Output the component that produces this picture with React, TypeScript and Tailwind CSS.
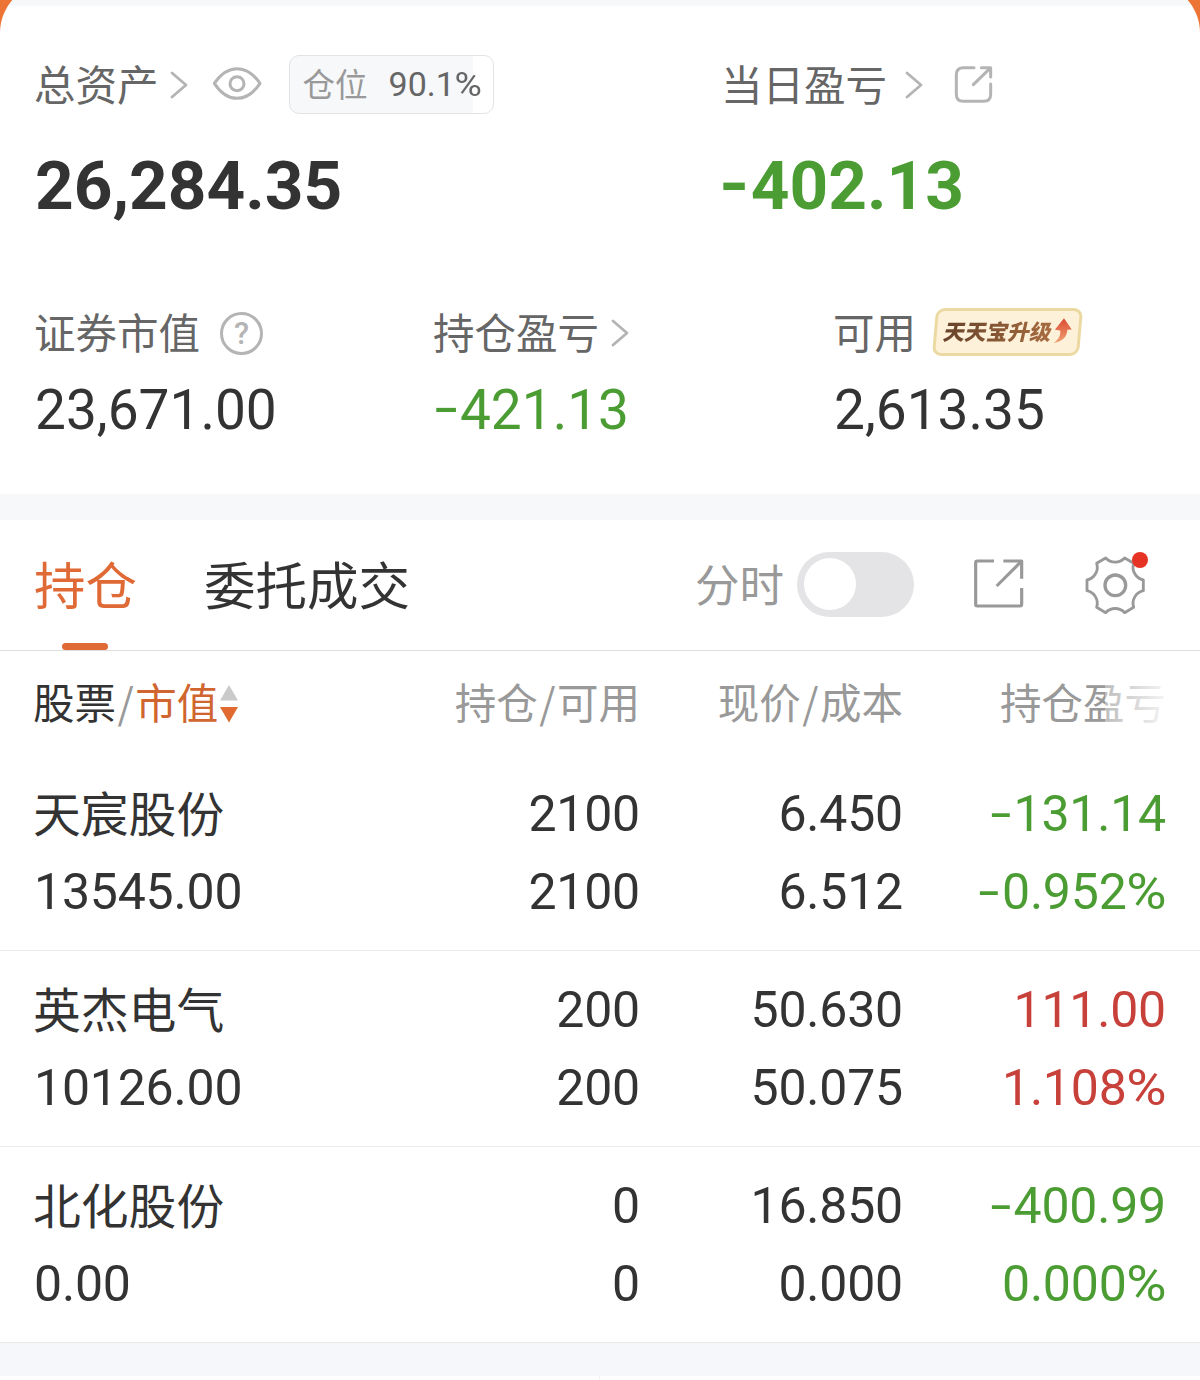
import type { ReactNode } from "react";
import { clsx } from "clsx";

type Tone = "plain" | "up" | "down";

interface Holding {
  name: string;
  marketValue: string;
  amount: string;
  available: string;
  price: string;
  cost: string;
  profit: string;
  profitRate: string;
  tone: Tone;
}

const holdings: Holding[] = [
  {
    name: "天宸股份",
    marketValue: "13545.00",
    amount: "2100",
    available: "2100",
    price: "6.450",
    cost: "6.512",
    profit: "-131.14",
    profitRate: "-0.952%",
    tone: "down",
  },
  {
    name: "英杰电气",
    marketValue: "10126.00",
    amount: "200",
    available: "200",
    price: "50.630",
    cost: "50.075",
    profit: "111.00",
    profitRate: "1.108%",
    tone: "up",
  },
  {
    name: "北化股份",
    marketValue: "0.00",
    amount: "0",
    available: "0",
    price: "16.850",
    cost: "0.000",
    profit: "-400.99",
    profitRate: "0.000%",
    tone: "down",
  },
];

const toneClass: Record<Tone, string> = {
  plain: "text-[#333]",
  up: "text-[#c8403a]",
  down: "text-[#4b9d33]",
};

// The minus and percent signs are wider than the font's own glyphs.
function Num({ value, bold, className }: { value: string; bold?: boolean; className?: string }) {
  const negative = value.startsWith("-");
  const percent = value.endsWith("%");
  const digits = value.replace(/[-%]/g, "");
  return (
    <span
      className={clsx(
        "font-[Roboto,sans-serif] whitespace-nowrap",
        bold && "font-bold",
        className,
      )}
    >
      {negative && (
        <span
          className={clsx(
            "inline-block origin-left -translate-y-[0.03em]",
            bold ? "-ml-[0.03em] w-[0.47em] scale-x-115" : "w-[0.49em] scale-x-150 pl-[0.02em]",
          )}
        >
          -
        </span>
      )}
      {digits}
      {percent && <span className="ml-[0.06em] inline-block origin-right scale-x-110">%</span>}
    </span>
  );
}

function Chevron({ className }: { className?: string }) {
  return (
    <svg
      viewBox="0 0 18 28"
      className={clsx("h-7 w-[18px] shrink-0", className)}
      fill="none"
      stroke="#b4b4b4"
      strokeWidth="2.8"
      strokeLinecap="round"
      strokeLinejoin="round"
    >
      <path d="M2 2l14 12L2 26" />
    </svg>
  );
}

function EyeIcon() {
  return (
    <svg
      viewBox="636 196 150 105"
      className="mb-1 ml-[24px] h-[35px] w-[50px] shrink-0"
      fill="none"
      stroke="#b4b4b4"
      strokeWidth="9"
      strokeLinejoin="round"
    >
      <path d="M643 248C662 220 684 204 711 204S761 220 780 248C761 277 738 293 711 293S662 277 643 248Z" />
      <circle cx="711" cy="249" r="21" />
    </svg>
  );
}

function ShareIcon() {
  return (
    <svg
      viewBox="762 195 117 117"
      className="mb-[2px] ml-[31px] size-[39px] shrink-0"
      fill="none"
      stroke="#b4b4b4"
      strokeWidth="9"
      strokeLinecap="round"
      strokeLinejoin="round"
    >
      <path d="M822 203H790Q769 203 769 224V283Q769 304 790 304H851Q872 304 872 283V252" />
      <path d="M844 203H872V231M870 205L820 254" />
    </svg>
  );
}

function ShareSquareIcon() {
  return (
    <svg
      viewBox="878 87 156 156"
      className="mb-[2px] ml-[59px] size-[52px] shrink-0"
      fill="none"
      stroke="#999"
      strokeWidth="9.5"
      strokeLinejoin="round"
    >
      <path d="M941 96H891Q886 96 886 101V226Q886 231 891 231H1019Q1024 231 1024 226V177" />
      <path d="M969 96H1024V149" />
      <path d="M1022 98L949 171" />
    </svg>
  );
}

function GearIcon() {
  return (
    <svg
      viewBox="1213 71 186 186"
      className="size-[62px]"
      fill="none"
      stroke="#999"
      strokeLinejoin="round"
    >
      <path
        strokeWidth="8.5"
        d="M1278 83L1251 99A39 39 0 0 1 1222 149V181A39 39 0 0 1 1251 231L1278 247A39 39 0 0 1 1335 247L1362 231A39 39 0 0 1 1391 181V149A39 39 0 0 1 1362 99L1335 83A39 39 0 0 1 1278 83Z"
      />
      <circle cx="1307" cy="165" r="31" strokeWidth="10" />
    </svg>
  );
}

function HelpIcon() {
  return (
    <span className="ml-[20px] flex size-[43px] shrink-0 items-center justify-center rounded-full border-[3px] border-[#b4b4b4] font-[Roboto,sans-serif] text-[31px] leading-none font-medium text-[#b4b4b4]">
      ?
    </span>
  );
}

function UpgradeTag() {
  return (
    <span className="mb-[2px] ml-[18px] flex h-12 w-[147px] shrink-0 -skew-x-5 items-center rounded-[9px] border-[3px] border-[#ecd9a2] bg-[#fdf1da] pl-[7px]">
      <span className="-skew-x-8 bg-linear-to-r from-[#67432a] to-[#a86c40] bg-clip-text pb-[2px] text-[21.6px] leading-[36px] font-black whitespace-nowrap text-transparent">
        天天宝升级
      </span>
      <svg viewBox="764 82 62 80" className="mb-1 h-[27px] w-[21px] shrink-0 skew-x-5">
        <defs>
          <linearGradient id="tagArrow" x1="0" y1="0" x2="0" y2="1">
            <stop offset="0" stopColor="#dc4a32" />
            <stop offset="1" stopColor="#f0a273" />
          </linearGradient>
        </defs>
        <path
          fill="url(#tagArrow)"
          d="M799 86L822 119L809 120C808 141 795 155 768 159C783 149 789 138 788 122L772 120Z"
        />
      </svg>
    </span>
  );
}

function PositionBadge() {
  return (
    <span className="mb-[2px] ml-[27px] flex h-[59px] w-[205px] shrink-0 items-center rounded-[10px] border border-[#e3e3e5] bg-linear-to-r from-[#f7f8fa] from-90% to-white to-90% pl-[13px]">
      <span className="pb-[2px] text-[32.5px] leading-[54px] text-[#999]">仓位</span>
      <Num value="90.1%" className="ml-[21px] text-[34px] leading-[56px] text-[#666]" />
    </span>
  );
}

function Label({ text, children }: { text: string; children?: ReactNode }) {
  return (
    <div className="flex h-[60px] items-center">
      <span className="pb-1 text-[41.5px] leading-[56px] whitespace-nowrap text-[#666]">{text}</span>
      {children}
    </div>
  );
}

function Summary() {
  return (
    <section className="h-[494px] overflow-hidden bg-[#ec7535]">
      <div className="-mt-[17px] h-[511px] overflow-hidden rounded-t-[50px] bg-white">
        <div className="h-[23px] bg-[#f7f8fa]" />
        <div className="flex pt-[49px] pl-[34px]">
          <div className="w-[687px]">
            <Label text="总资产">
              <Chevron className="ml-[11px]" />
              <EyeIcon />
              <PositionBadge />
            </Label>
            <Num
              bold
              value="26,284.35"
              className="mt-[31px] ml-px block text-[67.5px] leading-[80px] text-[#333]"
            />
          </div>
          <div>
            <Label text="当日盈亏">
              <Chevron className="ml-[18px]" />
              <ShareIcon />
            </Label>
            <Num
              bold
              value="-402.13"
              className="mt-[31px] block text-[67.5px] leading-[80px] text-[#4b9d33]"
            />
          </div>
        </div>

        <div className="mt-[77px] flex pl-[34px]">
          <div className="w-[399px]">
            <Label text="证券市值">
              <HelpIcon />
            </Label>
            <Num value="23,671.00" className="mt-[17px] ml-px block text-[55px] leading-[60px] text-[#333]" />
          </div>
          <div className="w-[400px]">
            <Label text="持仓盈亏">
              <Chevron className="ml-[12px]" />
            </Label>
            <Num value="-421.13" className="mt-[17px] block text-[55px] leading-[60px] text-[#4b9d33]" />
          </div>
          <div>
            <Label text="可用">
              <UpgradeTag />
            </Label>
            <Num value="2,613.35" className="mt-[17px] ml-px block text-[55px] leading-[60px] text-[#333]" />
          </div>
        </div>
      </div>
    </section>
  );
}

function TabBar() {
  return (
    <div className="flex h-[131px] items-center border-b border-[#dedede] pl-[34px] text-[51.5px] leading-[70px]">
      <button type="button" className="relative pb-1 text-[#e06a35]">
        持仓
        <span className="absolute -bottom-[28px] left-[28px] h-[7px] w-[46px] rounded-full bg-[#e06a35]" />
      </button>
      <button type="button" className="ml-[67px] pb-1 text-[#333]">
        委托成交
      </button>
      <span className="ml-[285px] pb-1 text-[44.5px] text-[#999]">分时</span>
      <button
        type="button"
        role="switch"
        aria-checked={false}
        aria-label="分时"
        className="mb-[2px] ml-[13px] flex h-[65px] w-[117px] shrink-0 items-center rounded-full bg-[#e4e4e6] pl-[7px]"
      >
        <span className="size-[52px] rounded-full bg-white" />
      </button>
      <ShareSquareIcon />
      <span className="relative ml-[59px] shrink-0">
        <GearIcon />
        <span className="absolute -top-[2px] right-[-2px] size-4 rounded-full bg-[#e63323]" />
      </span>
    </div>
  );
}

const columns = "grid grid-cols-[306px_300px_263px_263px] pl-[34px]";

function Slash() {
  return <span className="inline-block px-[1.5px]">/</span>;
}

function TableHeader() {
  return (
    <div
      className={clsx(
        columns,
        "relative h-[103px] items-center pb-1 text-[41.5px] leading-[60px] text-[#999]",
      )}
    >
      <div className="-ml-px flex items-center whitespace-nowrap">
        <span className="text-[#333]">股票</span>
        <Slash />
        <span className="text-[#d0652f]">市值</span>
        <svg viewBox="0 0 18 38" className="mt-[6px] ml-[2px] h-[38px] w-[18px] shrink-0">
          <path d="M9 0l9 15.500H0z" fill="#cacaca" />
          <path d="M0 22h18l-9 15.500z" fill="#e06a2f" />
        </svg>
      </div>
      <div className="text-right">
        持仓
        <Slash />
        可用
      </div>
      <div className="text-right">
        现价
        <Slash />
        成本
      </div>
      <div className="text-right">持仓盈亏</div>
      <div className="absolute inset-y-0 right-0 w-[95px] bg-linear-to-r from-white/35 to-white to-75%" />
    </div>
  );
}

function HoldingRow({ item }: { item: Holding }) {
  return (
    <div
      className={clsx(
        columns,
        "h-[196px] border-b border-[#e9e9e9] pt-5 text-[50px] leading-[78px] tracking-[-0.2px] text-[#333]",
      )}
    >
      <div className="flex flex-col">
        <span className="-ml-px pb-1 text-[47.8px] leading-[74px] tracking-normal whitespace-nowrap">
          {item.name}
        </span>
        <Num value={item.marketValue} />
      </div>
      <div className="flex flex-col items-end">
        <Num value={item.amount} />
        <Num value={item.available} />
      </div>
      <div className="flex flex-col items-end">
        <Num value={item.price} />
        <Num value={item.cost} />
      </div>
      <div className={clsx("flex flex-col items-end", toneClass[item.tone])}>
        <Num value={item.profit} />
        <Num value={item.profitRate} />
      </div>
    </div>
  );
}

export default function App() {
  return (
    <main className="h-[1380px] w-[1200px] overflow-hidden bg-white font-['Noto_Sans_CJK_SC',sans-serif]">
      <Summary />
      <div className="h-[26px] bg-[#f7f8fa]" />
      <TabBar />
      <TableHeader />
      <div className="pt-[1px]">
        {holdings.map((item) => (
          <HoldingRow key={item.name} item={item} />
        ))}
      </div>
      <div className="h-[33px] bg-[#f6f7fa]" />
      <div className="flex h-1">
        <div className="w-[600px] border-r border-[#f2f2f2]" />
      </div>
    </main>
  );
}
